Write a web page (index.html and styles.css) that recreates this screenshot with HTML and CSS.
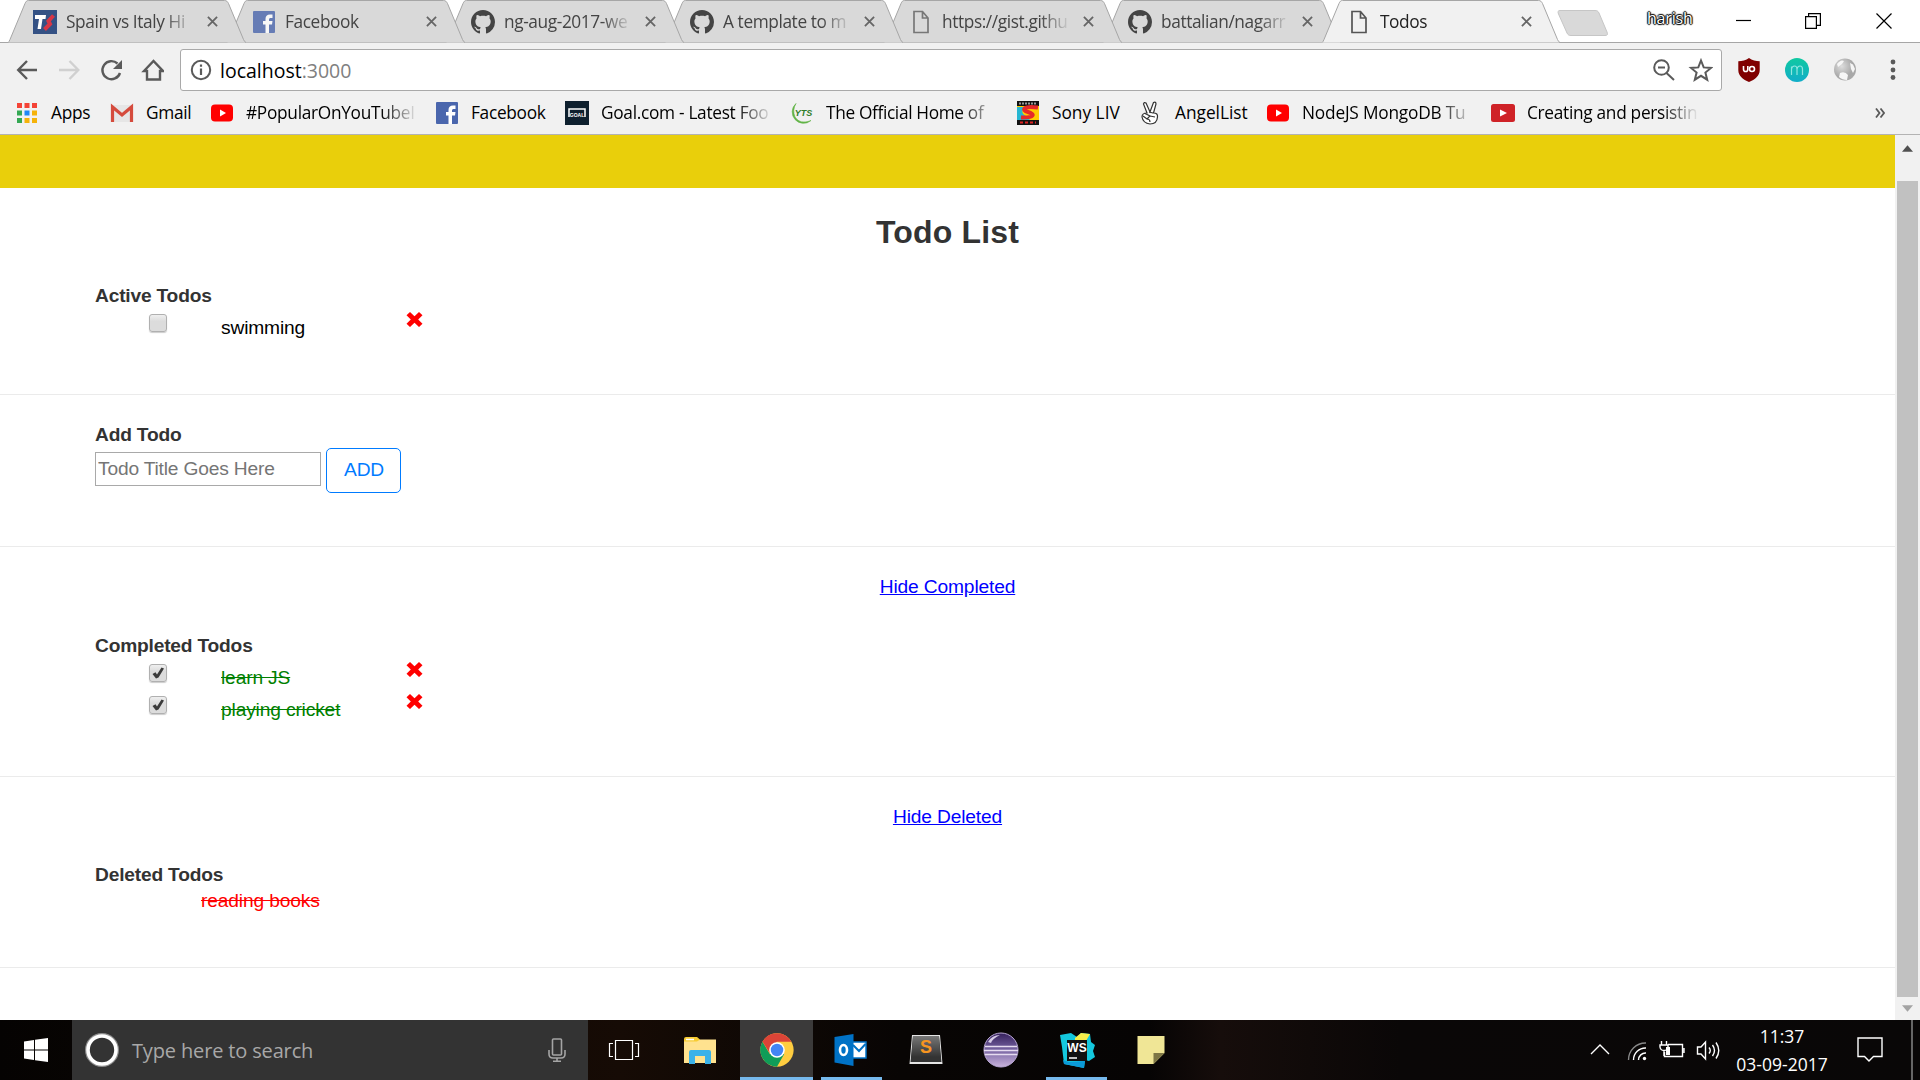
FILE: index.html
```html
<!DOCTYPE html>
<html lang="en">
<head>
<meta charset="utf-8">
<title>Todos</title>
<link rel="stylesheet" href="styles.css">
</head>
<body>
<svg class="defs" width="0" height="0">
  <defs>
    <symbol id="tab-shape" viewBox="0 0 238 43"><path d="M0 42.500Q1 42 2 39.500L17 3.500C18 1.500 18.500 0.500 20.500 0.500H216.500C218.500 0.500 219.500 1.500 220.500 3.500L235.500 39.500Q236.500 42 238 42.500"/></symbol>
    <symbol id="close" viewBox="0 0 12 12"><path d="M1 1L11 11M11 1L1 11" stroke="currentColor" stroke-width="2"/></symbol>
    <symbol id="github" viewBox="0 0 16 16"><path fill="#444" d="M8 0C3.580 0 0 3.580 0 8c0 3.540 2.290 6.530 5.470 7.590.4.070.55-.17.55-.38 0-.19-.01-.82-.01-1.490-2.010.37-2.530-.49-2.690-.94-.09-.23-.48-.94-.82-1.130-.28-.15-.68-.52-.01-.53.63-.01 1.080.58 1.230.82.72 1.210 1.870.87 2.330.66.07-.52.28-.87.51-1.070-1.780-.2-3.640-.89-3.640-3.950 0-.87.31-1.590.82-2.150-.08-.2-.36-1.020.08-2.120 0 0 .67-.21 2.200.82.64-.18 1.320-.27 2-.27s1.360.09 2 .27c1.530-1.040 2.200-.82 2.200-.82.44 1.100.16 1.920.08 2.120.51.56.82 1.270.82 2.150 0 3.070-1.870 3.750-3.650 3.950.29.25.54.73.54 1.480 0 1.070-.01 1.930-.01 2.200 0 .21.15.46.55.38A8.010 8.010 0 0 0 16 8c0-4.420-3.580-8-8-8z"/></symbol>
    <symbol id="facebook" viewBox="0 0 24 24"><rect x="1" y="1" width="22" height="22" rx="1" fill="#4a66ad"/><path d="M13.500 23V14.500H11V11H13.500V9C13.500 6 15 4.500 18 4.500H20.500V8H18.800C17.500 8 17 8.500 17 9.700V11H20.500L20 14.500H17V23Z" fill="#fff"/></symbol>
    <symbol id="page" viewBox="0 0 16 24"><path d="M1 1.500H9.500L15 8V22.500H1ZM9.500 1.500V8H15" fill="none" stroke="currentColor" stroke-width="1.700"/></symbol>
    <symbol id="youtube" viewBox="0 0 24 24"><rect x="1" y="3.500" width="22" height="17" rx="4" fill="#f00"/><path d="M10 8.500L16 12L10 15.500Z" fill="#fff"/></symbol>
    <symbol id="youtube-old" viewBox="0 0 24 24"><rect x="0" y="3" width="24" height="18" rx="2.500" fill="#cf2227"/><path d="M9 8.500L16 12L9 15.500Z" fill="#fff"/></symbol>
    <symbol id="cross" viewBox="0 0 17 17"><path d="M4 1L8.500 5.300L13 1L16.500 4.300L12.200 8.500L16.500 12.700L13 16L8.500 11.700L4 16L0.500 12.700L4.800 8.500L0.500 4.300Z" fill="red"/></symbol>
    <symbol id="tick" viewBox="0 0 14 14"><path d="M1.500 8L4.500 6.200L6 8.600L10.500 1.500L13 2.500L7.500 11.500L5 12.500Z" fill="#3b3b3b"/></symbol>
  </defs>
</svg>

<header class="tabstrip">
  <div class="tab"><svg class="shape"><use href="#tab-shape"/></svg>
    <svg class="favicon" viewBox="0 0 24 24"><rect width="24" height="24" fill="#345184"/><path d="M2 5H13L12.500 9H9.500L8 19H4.500L6 9H2Z" fill="#fff"/><path d="M20.500 5.500L15.500 11L17 14L11.500 19.500" stroke="#d93645" stroke-width="4" fill="none"/></svg>
    <span class="title">Spain vs Italy Hi</span><svg class="x"><use href="#close"/></svg></div>
  <div class="tab"><svg class="shape"><use href="#tab-shape"/></svg><svg class="favicon faded"><use href="#facebook"/></svg><span class="title">Facebook</span><svg class="x"><use href="#close"/></svg></div>
  <div class="tab"><svg class="shape"><use href="#tab-shape"/></svg><svg class="favicon"><use href="#github"/></svg><span class="title">ng-aug-2017-we</span><svg class="x"><use href="#close"/></svg></div>
  <div class="tab"><svg class="shape"><use href="#tab-shape"/></svg><svg class="favicon"><use href="#github"/></svg><span class="title">A template to m</span><svg class="x"><use href="#close"/></svg></div>
  <div class="tab"><svg class="shape"><use href="#tab-shape"/></svg><svg class="favicon page"><use href="#page"/></svg><span class="title">https://gist.githu</span><svg class="x"><use href="#close"/></svg></div>
  <div class="tab"><svg class="shape"><use href="#tab-shape"/></svg><svg class="favicon"><use href="#github"/></svg><span class="title">battalian/nagarr</span><svg class="x"><use href="#close"/></svg></div>
  <div class="tab active"><svg class="shape"><use href="#tab-shape"/></svg><svg class="favicon page"><use href="#page"/></svg><span class="title">Todos</span><svg class="x"><use href="#close"/></svg></div>
  <svg class="newtab" viewBox="0 0 52 26"><path d="M3 .5H38C40 .5 41 1 42 3L50 22C51 24.500 50.500 25.500 48 25.500H14C12 25.500 11 25 10 23L1.500 4C.5 1.500 1 .5 3 .5Z" fill="#d9d9d9" stroke="#c6c6c6"/></svg>
  <span class="user">harish</span>
  <svg class="winctl" viewBox="0 0 156 16" fill="none" stroke="#000" stroke-width="1.200"><path d="M0 7.500H15"/><path d="M69.600 3.600H80.400V15.400H69.600ZM72.600 3.600V.6H84.400V12.400H80.400"/><path d="M140.500 .5L155.500 15.500M155.500 .5L140.500 15.500"/></svg>
</header>

<div class="toolbar">
  <svg class="nav" viewBox="0 0 148 24" fill="none" stroke="#5a5a5a" stroke-width="2.400">
    <path d="M21 12H2.500M11 3L2.200 12L11 21"/>
    <path d="M43 12H62M53.500 3L62.300 12L53.500 21" stroke="#d0d0d0"/>
    <path d="M104 15A9 9 0 1 1 101.500 5.500"/><path d="M106 2V11H97Z" fill="#5a5a5a" stroke="none"/>
    <path d="M131 21.500V13H128L137.500 3L147 13H144V21.500Z"/>
  </svg>
  <div class="omnibox">
    <svg class="info" viewBox="0 0 22 22"><circle cx="11" cy="11" r="9.200" fill="none" stroke="#5a5a5a" stroke-width="2"/><path d="M11 9.500V16M11 5.500V7.700" stroke="#5a5a5a" stroke-width="2.200"/></svg>
    <span class="url">localhost<i>:3000</i></span>
    <svg class="omniicons" viewBox="0 0 60 24" fill="none" stroke="#5a5a5a" stroke-width="2"><circle cx="8.500" cy="9.500" r="7.300"/><path d="M5 9.500H12M13.500 15L21 22" /><path d="M48 2.500L50.700 9.400L58 9.900L52.400 14.600L54.200 21.700L48 17.800L41.800 21.700L43.600 14.600L38 9.900L45.300 9.400Z"/></svg>
  </div>
  <svg class="ext" viewBox="0 0 24 24"><path d="M12 0C9 2.500 5 3 1.300 3.300V12C1.300 18 6 21.500 12 24C18 21.500 22.700 18 22.700 12V3.300C19 3 15 2.500 12 0Z" fill="#800000"/><path d="M6.500 8V11.200Q6.500 13.500 8.700 13.500Q10.800 13.500 10.800 11.200V8" stroke="#fff" stroke-width="1.600" fill="none"/><circle cx="15" cy="11" r="2.500" stroke="#fff" stroke-width="1.600" fill="none"/></svg>
  <svg class="ext" viewBox="0 0 24 24"><defs><linearGradient id="mg" x2="0" y2="1"><stop stop-color="#10c9a1"/><stop offset="1" stop-color="#11adc9"/></linearGradient></defs><circle cx="12" cy="12" r="12" fill="url(#mg)"/><path d="M6.500 17V8.500M6.500 11Q7 8 9.500 8Q12 8 12 11V17M12 11Q12.500 8 15 8Q17.500 8 17.500 11V17" fill="none" stroke="#8ee6e0" stroke-width="1.200"/></svg>
  <svg class="ext" viewBox="0 0 24 24"><defs><radialGradient id="gg" cx=".35" cy=".35"><stop stop-color="#ddd"/><stop offset="1" stop-color="#a8a8a8"/></radialGradient></defs><circle cx="12" cy="11.500" r="11" fill="url(#gg)"/><path d="M4 6Q8 1 11 3L9 6L5 9ZM17 5L20 6.500L22 11L20 15L18 11ZM7 15Q12 13 15 17L14 22Q9 22 6 19Z" fill="#f6f6f6"/></svg>
  <svg class="menu" viewBox="0 0 6 24" fill="#5a5a5a"><circle cx="3" cy="4" r="2.400"/><circle cx="3" cy="12" r="2.400"/><circle cx="3" cy="19.500" r="2.400"/></svg>
</div>

<nav class="bookmarks">
  <a class="bm b1"><svg viewBox="0 0 24 24"><path d="M2 2h5v5H2zM9.500 2h5v5h-5zM17 2h5v5h-5z" fill="#f44336"/><path d="M2 9.500h5v5H2zM2 17h5v5H2z" fill="#34a853"/><path d="M9.500 9.500h5v5h-5z" fill="#1e88f5"/><path d="M17 9.500h5v5h-5zM9.500 17h5v5h-5zM17 17h5v5h-5z" fill="#f5b30a"/></svg><span>Apps</span></a>
  <a class="bm b2"><svg viewBox="0 0 24 24"><rect x="1" y="4" width="22" height="17" rx="2" fill="#e6e6e6"/><path d="M2.500 21V6L12 14L21.500 6V21" fill="none" stroke="#d54b3d" stroke-width="3.200"/></svg><span>Gmail</span></a>
  <a class="bm b3"><svg><use href="#youtube"/></svg><span>#PopularOnYouTubeI</span></a>
  <a class="bm b4"><svg><use href="#facebook"/></svg><span>Facebook</span></a>
  <a class="bm b5"><svg viewBox="0 0 24 24"><rect width="24" height="24" fill="#0e202e"/><path d="M4 16V8H20V16" fill="none" stroke="#fff" stroke-width="1.500"/><text x="12" y="16" class="goal">GOAL</text></svg><span>Goal.com - Latest Foo</span></a>
  <a class="bm b6"><svg viewBox="0 0 24 24"><path d="M6 2.500A10 10 0 0 0 21 19.500Q10 24 5 16Q2 9 6 2.500Z" fill="#62b446" stroke="#62b446" stroke-width=".6"/><path d="M7 3Q3 10 7 15Q12 21 20 19L22 8L14 2Z" fill="#f1f1f1"/><text x="13.500" y="15" class="yts">YTS</text></svg><span>The Official Home of</span></a>
  <a class="bm b7"><svg viewBox="0 0 24 24"><rect x="1" width="22" height="24" fill="#111"/><rect x="1" y="5" width="22" height="14" fill="#fc0"/><path d="M1 6H9Q3 12 10 15L14 19H1Z" fill="#25b6d2"/><path d="M22 6.500C7 4.500 5 9 12 11S19 17 5 16.500" stroke="#e62a2a" stroke-width="4" fill="none"/><path d="M4 21.500H20" stroke="#d22" stroke-width="2" stroke-dasharray="3 2"/><path d="M3 2.500H20" stroke="#999" stroke-width="2" stroke-dasharray="2 1"/></svg><span>Sony LIV</span></a>
  <a class="bm b8"><svg viewBox="0 0 24 24" fill="#fff" stroke="#333" stroke-width="1.200"><path d="M8 12L4.500 3Q5 .8 7 2L11 11L14.500 1.500Q17 .5 17 3L14.500 12Q19 12 18.500 16Q18 23 11 23Q4 22 3 16Q3 12 8 12Z"/><path d="M4 15L8 18L11 15L6 12.500M11 15L16 16M8 18Q11 18 11 21M10 11L14 12" fill="none"/></svg><span>AngelList</span></a>
  <a class="bm b9"><svg><use href="#youtube"/></svg><span>NodeJS MongoDB Tu</span></a>
  <a class="bm b10"><svg><use href="#youtube-old"/></svg><span>Creating and persistin</span></a>
  <svg class="more" viewBox="0 0 10 10" fill="none" stroke="#5a5a5a" stroke-width="1.800"><path d="M1 .5L4.500 5L1 9.500M5.500 .5L9 5L5.500 9.500"/></svg>
</nav>

<div class="viewport">
  <main class="page-body">
    <div class="banner"></div>
    <h1>Todo List</h1>
    <section class="active-todos">
      <h2>Active Todos</h2>
      <div class="todo"><span class="check"></span><span class="label">swimming</span><svg class="del"><use href="#cross"/></svg></div>
    </section>
    <section class="add-todo">
      <h2>Add Todo</h2>
      <form class="add"><input type="text" placeholder="Todo Title Goes Here"><button type="button">ADD</button></form>
    </section>
    <section class="completed">
      <a class="toggle">Hide Completed</a>
      <h2>Completed Todos</h2>
      <div class="todo done"><span class="check"><svg><use href="#tick"/></svg></span><span class="label">learn JS</span><svg class="del"><use href="#cross"/></svg></div>
      <div class="todo done"><span class="check"><svg><use href="#tick"/></svg></span><span class="label">playing cricket</span><svg class="del"><use href="#cross"/></svg></div>
    </section>
    <section class="deleted">
      <a class="toggle">Hide Deleted</a>
      <h2>Deleted Todos</h2>
      <div class="removed">reading books</div>
    </section>
  </main>
  <aside class="scrollbar"><svg viewBox="0 0 12 7"><path d="M0 7L6 0L12 7Z" fill="#505050"/></svg><div class="thumb"></div><svg viewBox="0 0 12 7"><path d="M0 0L6 7L12 0Z" fill="#a3a3a3"/></svg></aside>
</div>

<footer class="taskbar">
  <div class="start"><svg viewBox="0 0 24 24" width="24" height="24" fill="#fff"><path d="M0 3.500L10 2V11.500H0ZM11 1.800L24 0V11.500H11ZM0 12.500H10V22L0 20.500ZM11 12.500H24V24L11 22.200Z"/></svg></div>
  <div class="search">
    <svg class="ring" viewBox="0 0 34 34"><circle cx="17" cy="17" r="15" fill="none" stroke="#8d8d8d" stroke-width="4"/><circle cx="17" cy="17" r="14" fill="none" stroke="#fff" stroke-width="3.600"/></svg>
    <span>Type here to search</span>
    <svg class="mic" viewBox="0 0 18 24" fill="none" stroke="#a5a5a5" stroke-width="1.600"><rect x="4.500" y="1" width="9" height="16" rx="1"/><path d="M1 12V16Q1 20 5 20H13Q17 20 17 16V12M9 20V23M5 23.200H13"/></svg>
  </div>
  <div class="app a0"><svg width="32" height="32" viewBox="0 0 32 32" fill="none" stroke="#fff" stroke-width="1.200"><path d="M7.500 6.500H24.500V25.500H7.500ZM5 9.500H1.500V22.500H5M27 9.500H30.500V22.500H27"/></svg></div>
  <div class="app a1"><svg width="34" height="34" viewBox="0 0 34 34"><path d="M1 6.500H33V30H1Z" fill="#ffe28f"/><path d="M1 6Q1 4 3 4H14L17 6.500L14 8.500H1Z" fill="#f8cc33"/><path d="M3 6.500H11" stroke="#fff" stroke-width="1.500"/><path d="M6 31V19Q6 17 8 17H26Q28 17 28 19V31H22V23H12V31Z" fill="#3bb2e8"/></svg></div>
  <div class="app a2 current"><svg width="34" height="34" viewBox="0 0 48 48"><circle cx="24" cy="24" r="23.500" fill="#ffcd40"/><path d="M24 24L34 30L24 47.500A23.500 23.500 0 0 1 3.600 12.200L14 30Z" fill="#0f9d58"/><path d="M3.600 12.200A23.500 23.500 0 0 1 44.400 12.500H24L14 20L14 29Z" fill="#db4437"/><circle cx="24" cy="24" r="11" fill="#fff"/><circle cx="24" cy="24" r="8.800" fill="#4285f4"/></svg></div>
  <div class="app a3 open"><svg width="34" height="34" viewBox="0 0 34 34"><rect x="18" y="9" width="14" height="16" fill="#fff" stroke="#0072c6" stroke-width="1.500"/><path d="M19 12L25 18L31.500 11" fill="none" stroke="#0072c6" stroke-width="2"/><path d="M.5 4L19.500 1V33L.5 29.500Z" fill="#0072c6"/><ellipse cx="9.500" cy="17" rx="3.500" ry="5" fill="none" stroke="#fff" stroke-width="2.600"/></svg></div>
  <div class="app a4"><svg width="34" height="34" viewBox="0 0 34 34"><defs><linearGradient id="sg" x2="0" y2="1"><stop stop-color="#777"/><stop offset="1" stop-color="#333"/></linearGradient></defs><path d="M3 2H31L33.500 31H.5Z" fill="#e5e5e5"/><path d="M4 3H30L32.500 29H1.500Z" fill="#333"/><path d="M4 3H30L31.500 24H2.500Z" fill="url(#sg)"/><text x="17" y="20" class="sub">S</text></svg></div>
  <div class="app a5"><svg width="36" height="36" viewBox="0 0 36 36"><defs><linearGradient id="eg" x2="0" y2="1"><stop stop-color="#35205c"/><stop offset=".5" stop-color="#7764a2"/><stop offset="1" stop-color="#c9b3dc"/></linearGradient></defs><circle cx="18" cy="18" r="17" fill="url(#eg)" stroke="#b9a8d4"/><path d="M2 14.500H34M1 18.500H35M2 22.500H34" stroke="#e6dcf0" stroke-width="1.600"/><path d="M5 10Q9 3 17 3Q9 7 8 11Z" fill="#d7cce7"/></svg></div>
  <div class="app a6 open"><svg width="36" height="36" viewBox="0 0 36 36"><path d="M1 3L12 1L18 5L22 1L31 2L32 10L36 13L34 19L36 25L30 29L26 28L25 36L5 32L3 15Z" fill="#14c8de"/><path d="M16 6L22 1L31 2L27 9H16Z" fill="#f5ee4a"/><path d="M4 28L10 30L26 29L25 36L5 32Z" fill="#0b9ad8"/><rect x="8" y="8" width="20" height="21" fill="#111"/><text x="18" y="20" class="ws">WS</text><path d="M10 26H18" stroke="#fff" stroke-width="1.500"/></svg></div>
  <div class="app a7"><svg width="28" height="28" viewBox="0 0 28 28"><path d="M.5 0H27.500V17L16.500 28H.5Z" fill="#f0e696"/><path d="M16.500 28V17H27.500Z" fill="#7d7645"/></svg></div>
  <div class="tray">
    <svg width="130" height="24" viewBox="0 0 130 24" fill="none" stroke="#fff" stroke-width="1.400"><path d="M1 16L10 7L19 16"/>
      <path d="M38.500 22A17 17 0 0 1 56 5" stroke="#888"/><path d="M43.500 22A12 12 0 0 1 56 10M48.500 22A7 7 0 0 1 56 15"/><circle cx="54.500" cy="20.500" r="1.700" fill="#fff" stroke="none"/>
      <path d="M78 6.500H92.500V18.500H74.500V14M94 10V15"/><path d="M76 9H80V17H76Z" fill="#fff" stroke="none"/><path d="M71.500 3V7M76.500 3V7M70 7H78V9Q77.500 12.500 74 12.500Q70.500 12.500 70 9ZM74 13V18"/>
      <path d="M107.500 9H111L115.500 4V21L111 16H107.500ZM119 9.500Q121.500 12.500 119 15.500M122.500 7Q126.500 12.500 122.500 18M126 4.500Q131.500 12.500 126 20.500"/></svg>
    <div class="clock"><span>11:37</span><span>03-09-2017</span></div>
    <svg width="26" height="26" viewBox="0 0 26 26" fill="none" stroke="#fff" stroke-width="1.400"><path d="M1 1H25V19.500H16.500L12 24L7.500 19.500H1Z"/></svg>
  </div>
</footer>
</body>
</html>
```
FILE: styles.css
```css
* { box-sizing: border-box; }
body { margin: 0; width: 1920px; height: 1080px; overflow: hidden; display: flex; flex-direction: column; background: #fff; font-family: "Open Sans", "Noto Sans", sans-serif; color: #000; }
svg { display: block; flex: none; }
.defs { position: absolute; }

/* tab strip */
.tabstrip { flex: none; height: 43px; display: flex; padding-left: 8px; position: relative; border-bottom: 1px solid #a6a6a6; }
.tab { position: relative; flex: none; width: 238px; height: 43px; margin-right: -19px; padding-left: 25px; display: flex; align-items: center; color: #444; }
.tab:nth-child(1) { z-index: 6; }
.tab:nth-child(2) { z-index: 5; }
.tab:nth-child(3) { z-index: 4; }
.tab:nth-child(4) { z-index: 3; }
.tab:nth-child(5) { z-index: 2; }
.tab:nth-child(6) { z-index: 1; }
.tab.active { z-index: 7; color: #222; }
.shape { position: absolute; left: 0; top: 0; width: 238px; height: 43px; fill: #d9d9d9; stroke: #a6a6a6; z-index: -1; }
.active .shape { fill: #f1f1f1; }
.favicon { width: 24px; height: 24px; color: #777; }
.favicon.faded { opacity: .8; }
.favicon.page { width: 16px; margin: 0 4px; }
.active .favicon { color: #555; }
.title { width: 138px; margin-left: 9px; white-space: nowrap; font-size: 17.3px; letter-spacing: -.4px; line-height: 28px; -webkit-mask-image: linear-gradient(90deg, #000 98px, transparent 129px); mask-image: linear-gradient(90deg, #000 98px, transparent 129px); }
.x { width: 11px; height: 11px; margin-left: 3px; color: #666; }
.newtab { width: 52px; height: 26px; margin: 10px 0 0 35px; }
.tab.active + .newtab { margin-left: 16px; }
.user { width: 46px; margin: 6px 0 0 38px; font-size: 16px; line-height: 24px; letter-spacing: -.2px; color: #fff; text-shadow: 0 0 2px #000, 1px 0 1px #000, -1px 0 1px #000, 0 1px 1px #000, 0 -1px 1px #000; }
.winctl { width: 156px; height: 16px; margin: 13px 0 0 43px; }

/* toolbar */
.toolbar { flex: none; height: 48px; padding: 6px 0 0 16px; display: flex; background: #f1f1f1; }
.nav { width: 148px; height: 24px; margin: 9px 16px 0 0; }
.omnibox { width: 1542px; height: 42px; display: flex; align-items: center; padding: 0 8px 0 10px; background: #fff; border: 1px solid #a9a9a9; border-radius: 3px; }
.info { width: 22px; height: 22px; margin-left: -1px; }
.url { flex: 1; margin-left: 8px; font-size: 19.5px; letter-spacing: 0; }
.url i { font-style: normal; color: #808080; }
.omniicons { width: 60px; height: 24px; }
.ext { width: 24px; height: 24px; margin: 9px 0 0 15px; }
.ext + .ext { margin-left: 24px; }
.menu { width: 6px; height: 24px; margin: 9px 0 0 33px; }

/* bookmarks */
.bookmarks { flex: none; height: 44px; display: flex; align-items: center; padding-left: 15px; background: #f1f1f1; border-bottom: 1px solid #b3b3b3; }
.bm { flex: none; display: flex; align-items: center; }
.bm svg { width: 24px; height: 24px; margin-right: 12px; }
.bm span { white-space: nowrap; font-size: 17.3px; letter-spacing: -.3px; line-height: 28px; }
.b1 { width: 95px; }
.b2 { width: 100px; }
.b3 { width: 225px; }
.b4 { width: 130px; }
.b5 { width: 225px; }
.b6 { width: 226px; }
.b7 { width: 123px; }
.b8 { width: 127px; }
.b9 { width: 225px; }
.b10 { width: 225px; }
.b3 span, .b5 span, .b6 span, .b9 span, .b10 span { width: 182px; -webkit-mask-image: linear-gradient(90deg, #000 135px, transparent 172px); mask-image: linear-gradient(90deg, #000 135px, transparent 172px); }
.b8 span { letter-spacing: 0; }
.b7 span { letter-spacing: 0; }
.b6 span { letter-spacing: -.35px; }
.b9 span { letter-spacing: -.2px; }
.more { width: 10px; height: 10px; margin-left: 159px; }
.goal { font: bold 5px "Liberation Sans", sans-serif; fill: #fff; text-anchor: middle; }
.yts { font: italic bold 9px "Liberation Sans", sans-serif; fill: #2f7d2a; text-anchor: middle; }

/* page */
.viewport { flex: none; height: 885px; display: flex; }
.page-body { width: 1895px; font: 19.2px/28px "Liberation Sans", Arial, sans-serif; letter-spacing: -.15px; }
.banner { height: 53px; background: #e9cf0b; }
h1 { margin: 24px 0 0; text-align: center; font-size: 32px; line-height: 40px; letter-spacing: .15px; color: #333; }
h2 { margin: 0 0 -1px; font-size: 19.2px; line-height: 28px; letter-spacing: -.2px; color: #333; }
section { border-bottom: 1px solid #ebebeb; padding-left: 95px; }
.active-todos { height: 143px; padding-top: 30px; }
.add-todo { height: 152px; padding-top: 26px; }
.completed { height: 230px; padding-top: 26px; }
.deleted { height: 191px; padding-top: 26px; }
.todo { display: flex; height: 32px; padding-left: 54px; }
.check { width: 18px; height: 18px; margin-top: 5px; padding: 1px; border: 1px solid #b0b0b0; border-radius: 3px; background: linear-gradient(#efefef, #dcdcdc 40%); box-shadow: 0 1px 1px #ccc; }
.check svg { width: 14px; height: 14px; }
.label { width: 185px; margin: 5px 0 0 54px; line-height: 28px; }
.del { width: 17px; height: 17px; margin-top: 2px; }
.done .label { color: green; text-decoration: line-through; }
.add { display: flex; gap: 5px; }
.add input { width: 226px; height: 34px; margin: 4px 0 0; padding: 0 2px; border: 1px solid #a9a9a9; background: #fff; font: 19.2px "Liberation Sans", Arial, sans-serif; letter-spacing: -.18px; }
.add input::placeholder { color: #757575; }
.add button { width: 75px; height: 45px; padding: 0 0 2px 1px; border: 1px solid #007bff; border-radius: 5px; background: #fff; color: #007bff; font: 19.2px "Liberation Sans", Arial, sans-serif; letter-spacing: -.2px; }
.toggle { display: block; margin: 0 0 31px -95px; text-align: center; color: #00f; text-decoration: underline; line-height: 28px; }
.deleted .toggle { margin-bottom: 30px; }
.removed { margin-top: 1px; padding-left: 106px; line-height: 24px; color: red; text-decoration: line-through; }
.scrollbar { width: 25px; padding: 10px 0 8px; display: flex; flex-direction: column; align-items: center; justify-content: space-between; background: #f1f1f1; }
.scrollbar svg { width: 11px; height: 7px; }
.thumb { width: 21px; height: 816px; margin-top: 29px; margin-bottom: auto; background: #c1c1c1; }

/* taskbar */
.taskbar { flex: none; height: 60px; display: flex; background: linear-gradient(90deg, #050302, #160b05 620px, #080504 900px, #060404 1150px, #160d0b 1220px, #0a0707 1400px, #090707); color: #fff; }
.start { width: 72px; padding: 18px 0 0 24px; }
.search { width: 516px; display: flex; align-items: center; padding-left: 13px; background: #333; }
.ring { width: 34px; height: 34px; }
.search span { width: 416px; margin: 1px 0 0 13px; font-size: 20px; letter-spacing: -.15px; color: #a8a8a8; }
.mic { width: 18px; height: 24px; }
.app { flex: none; display: flex; align-items: center; justify-content: center; border-bottom: 3px solid transparent; }
.app svg { margin-bottom: -3px; }
.a0 { width: 72px; }
.a1 { width: 80px; }
.a2 { width: 73px; margin-right: 8px; }
.a3 { width: 61px; }
.a3 svg { margin-right: 1px; }
.a4 { width: 88px; }
.a5 { width: 62px; margin-right: 14px; }
.a6 { width: 61px; margin-right: 13px; }
.a7 { width: 61px; }
.current { background: #3b3a3a; border-color: #76b9ed; }
.open { border-color: #76b9ed; }
.sub { font: bold 18px "Liberation Sans", sans-serif; fill: #f79520; text-anchor: middle; }
.ws { font: bold 12px "Liberation Sans", sans-serif; fill: #fff; text-anchor: middle; }
.tray { flex: 1; display: flex; align-items: center; margin-right: 7px; padding-left: 409px; border-right: 2px solid #666; }
.clock { width: 106px; margin: 0 22px 0 9px; display: flex; flex-direction: column; align-items: center; font-size: 17.5px; line-height: 28px; letter-spacing: 0; }
```
